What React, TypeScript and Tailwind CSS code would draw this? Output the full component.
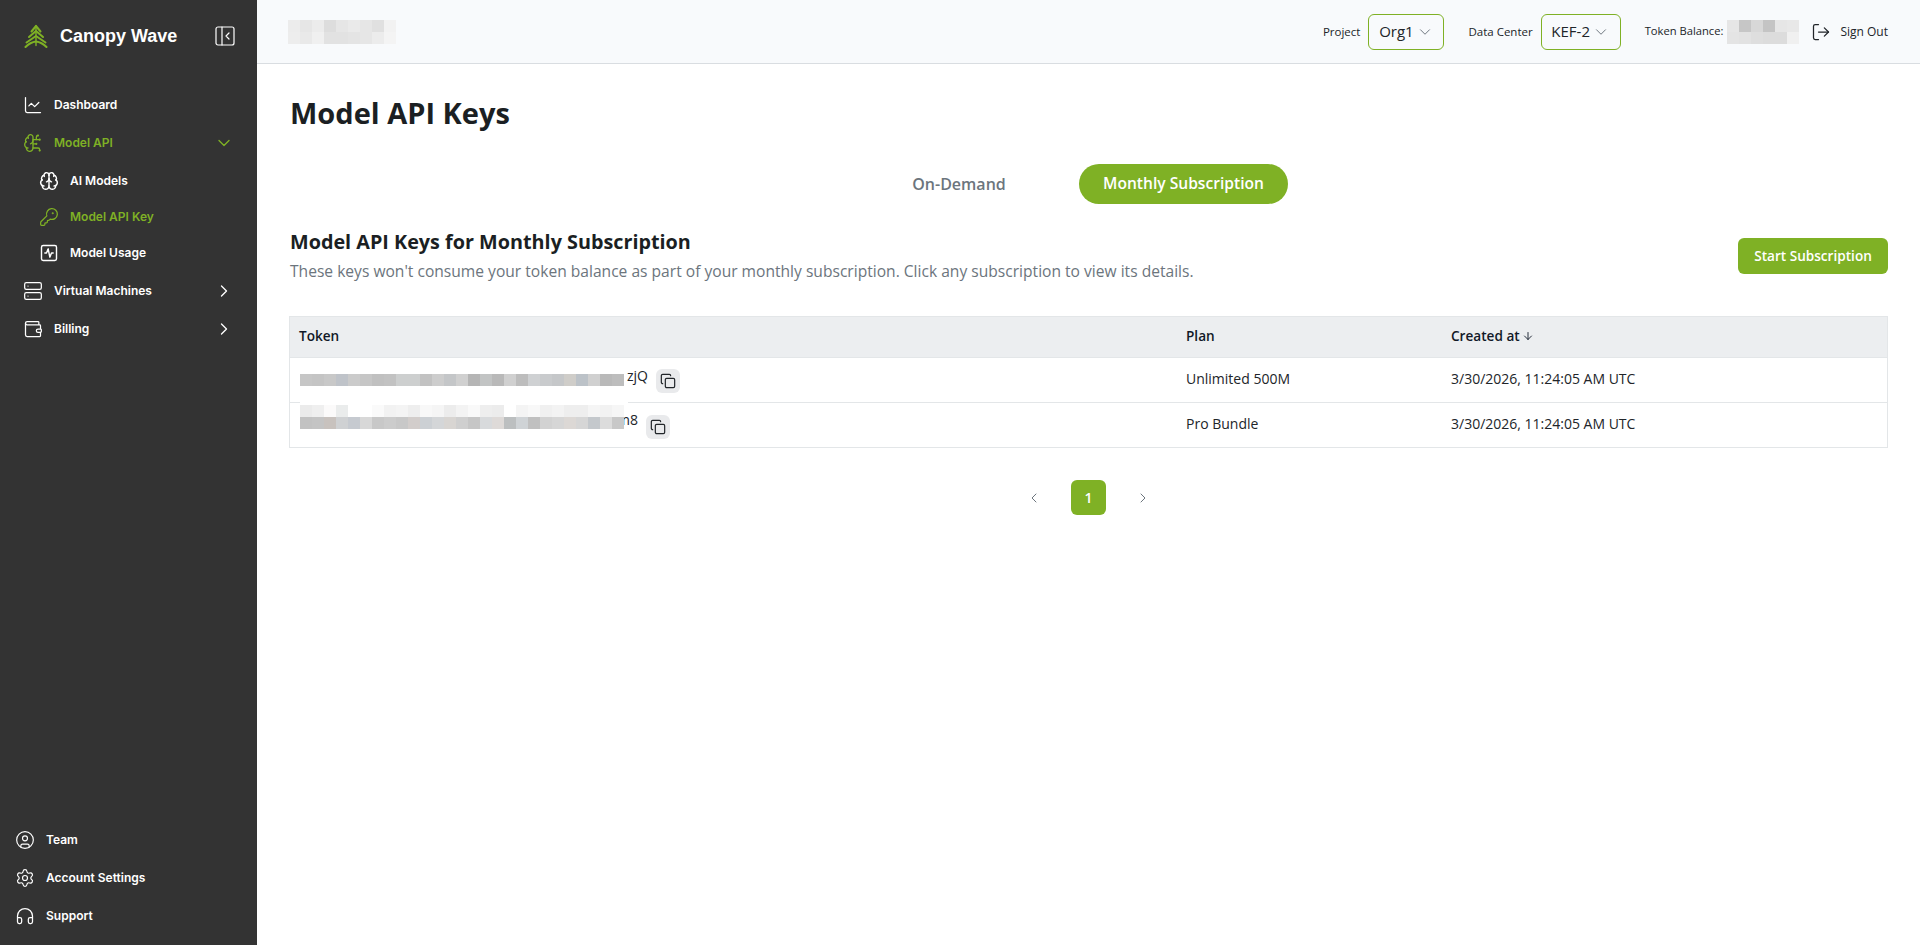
import { ChartLine, ChevronDown, ChevronRight, ChevronLeft, Copy, LogOut, ArrowDown, Server, Wallet, CircleUser, Settings, Headphones, KeyRound, SquareActivity, PanelLeftClose, BrainCircuit, Brain } from "lucide-react";

const SANS = "font-['Open_Sans','Noto_Sans',sans-serif]";

function Mosaic({ rows, cell = 12 }: { rows: string[][]; cell?: number }) {
  return (
    <div className="relative z-10 flex shrink-0 flex-col">
      {rows.map((row, i) => (
        <div key={i} className="flex">
          {row.map((c, j) => (
            <div key={j} style={{ width: cell, height: cell, backgroundColor: c }} />
          ))}
        </div>
      ))}
    </div>
  );
}

function Logo() {
  return (
    <svg viewBox="0 0 24 24" className="h-6 w-6 text-[#7fb125]" fill="none" stroke="currentColor" strokeWidth="2" strokeLinecap="round" strokeLinejoin="round">
      <path d="M12 1.500v20" strokeWidth="1.4" />
      <path d="M7.500 7.500 12 2l4.500 5.500" />
      <path d="M5 13 12 7l7 6" />
      <path d="M2.500 18.500 12 12l9.500 6.500" />
      <path d="M1.500 23c3-3 6.500-5 10.500-5.500 4 .5 7.500 2.500 10.500 5.500" />
    </svg>
  );
}

const ICON = "h-5 w-5 shrink-0";

function NavItem({ icon, label, active, sub, chevron, height = "h-9" }: { icon: React.ReactNode; label: string; active?: boolean; sub?: boolean; chevron?: "down" | "right"; height?: string }) {
  return (
    <div className={`flex ${height} items-center ${sub ? "pl-[41px]" : "pl-[25px]"} pr-[23px] ${active ? "text-[#7fb125]" : "text-white"}`}>
      <span className="flex w-4 shrink-0 justify-center">{icon}</span>
      <span className="ml-[13px] text-[12px] font-semibold font-['Inter',sans-serif]">{label}</span>
      {chevron === "down" && <ChevronDown className={`ml-auto ${ICON}`} strokeWidth={1.6} />}
      {chevron === "right" && <ChevronRight className={`ml-auto ${ICON}`} strokeWidth={1.6} />}
    </div>
  );
}

function Sidebar() {
  return (
    <aside className="flex h-full w-[257px] shrink-0 flex-col bg-[#333333]">
      <div className="flex h-[72px] items-center pl-6 pr-[20px]">
        <Logo />
        <span className="ml-3 text-[18px] font-bold text-white font-['Liberation_Sans',sans-serif]">Canopy Wave</span>
        <PanelLeftClose className="ml-auto h-6 w-6 text-white" strokeWidth={1.2} />
      </div>
      <nav className="mt-[14px] flex flex-col">
        <NavItem height="h-[38px]" icon={<ChartLine className={ICON} strokeWidth={1.5} />} label="Dashboard" />
        <NavItem height="h-[38px]" icon={<BrainCircuit className={ICON} strokeWidth={1.6} />} label="Model API" active chevron="down" />
        <NavItem height="h-[37px]" sub icon={<Brain className={ICON} strokeWidth={1.7} />} label="AI Models" />
        <NavItem sub icon={<KeyRound className={ICON} strokeWidth={1.5} />} label="Model API Key" active />
        <NavItem sub icon={<SquareActivity className={ICON} strokeWidth={1.7} />} label="Model Usage" />
        <div className="h-px" />
        <NavItem height="h-[38px]" icon={<Server className={ICON} strokeWidth={1.5} />} label="Virtual Machines" chevron="right" />
        <NavItem height="h-[38px]" icon={<Wallet className={ICON} strokeWidth={1.5} />} label="Billing" chevron="right" />
      </nav>
      <div className="mt-auto mb-[11px] flex flex-col gap-[2px] text-white">
        {[
          { label: "Team", icon: <CircleUser className={ICON} strokeWidth={1.4} /> },
          { label: "Account Settings", icon: <Settings className={ICON} strokeWidth={1.4} /> },
          { label: "Support", icon: <Headphones className={ICON} strokeWidth={1.5} /> },
        ].map((it) => (
          <div key={it.label} className="flex h-9 items-center pl-[17px]">
            <span className="flex w-4 shrink-0 justify-center">{it.icon}</span>
            <span className="ml-[13px] text-[12px] font-semibold font-['Inter',sans-serif]">{it.label}</span>
          </div>
        ))}
      </div>
    </aside>
  );
}

function Header() {
  return (
    <header className="flex h-[64px] shrink-0 items-center border-b border-[#d9dde1] bg-[#f8fafc] pl-[31px] pr-8 text-[#212529]">
      <Mosaic rows={[
        ["#ececec", "#e6e6e6", "#ececec", "#dddddd", "#e6e6e6", "#eaeaea", "#e6e6e6", "#e0e0e0", "#f2f2f2"],
        ["#ededed", "#e9e9e9", "#f0f0f0", "#e2e2e2", "#e2e2e2", "#e4e4e4", "#e6e6e6", "#ececec", "#f4f4f4"],
      ]} />
      <div className="ml-auto flex items-center text-[11.500px]">
        <span>Project</span>
        <div className="ml-2 flex h-9 w-[76px] items-center justify-center gap-[2px] rounded-md border border-[#7fb125] text-[15px]">
          Org1 <ChevronDown className="h-[18px] w-[18px] text-[#6c757d]" strokeWidth={1.3} />
        </div>
        <span className="ml-6">Data Center</span>
        <div className="ml-2 flex h-9 w-[80px] items-center justify-center gap-[2px] rounded-md border border-[#7fb125] text-[15px]">
          KEF-2 <ChevronDown className="h-[18px] w-[18px] text-[#6c757d]" strokeWidth={1.3} />
        </div>
        <span className="ml-6 text-[11.200px]">Token Balance:</span>
        <div className="ml-1">
          <Mosaic rows={[
            ["#e6e6e6", "#c6c6c6", "#d8d8d8", "#c4c4c4", "#e6e6e6", "#e8e8e8"],
            ["#e4e4e4", "#e2e2e2", "#dedede", "#dcdcdc", "#dcdcdc", "#f0f0f0"],
          ]} />
        </div>
        <LogOut className="ml-3 h-5 w-5" strokeWidth={1.5} />
        <span className="ml-[9px] text-[12px]">Sign Out</span>
      </div>
    </header>
  );
}

function CopyBtn({ className }: { className: string }) {
  return (
    <span className={`inline-flex h-6 w-6 shrink-0 items-center justify-center rounded-md bg-[#e9eaec] ${className}`}>
      <Copy className="h-4 w-4 text-[#212529]" strokeWidth={1.8} />
    </span>
  );
}

export default function App() {
  const m1 = ["#c6c6c6","#c4c4c4","#c8c8c8","#bfc3c9","#cbcbcb","#c6c6c6","#c0c0c0","#c2c2c2","#cdcfcf","#cdcfcf","#c2c2c2","#cdcdcd","#c4c6c8","#d0d0d0","#b5b5b5","#c2c4c4","#b9b9b9","#d0d0d0","#bdbdbd","#cfd1d3","#c9cbcd","#c5c7c9","#cfcdc9","#bcc2c8","#d0d0d0","#b9b9b9","#bdbdbd"];
  const m2a = ["#ebebeb","#efefef","#fbfafa","#eaecec","#ffffff","#ffffff","#fafafa","#f2f2f2","#f4f4f4","#eeeeee","#f8f8f8","#f5f5f5","#ececec","#f3f3f3","#f9f9f9","#eeeeee","#ececec","#ffffff","#f4f4f4","#f8f8f8","#f0f0f0","#f3f3f3","#eeeeee","#eeeeee","#f5f5f5","#f2f2f2","#f6f6f6"];
  const m2b = ["#c2c2c2","#c4c4c4","#c8c2be","#cfd1d3","#c6cad0","#d8d8d8","#c8c8c8","#cccccc","#c8c8c8","#d2cdcb","#ccd0d4","#d4d6d8","#d8d5d2","#cfcfcf","#c6c6c6","#d8dadc","#dedad8","#bcbfc0","#cfd3d6","#c0c0c0","#d2d2d2","#d6d6d6","#dcd8d5","#d6d6d6","#c4c8cc","#dcdcdc","#c8c8c8"];
  return (
    <div className={`flex h-[945px] w-full overflow-hidden bg-white ${SANS}`}>
      <Sidebar />
      <div className="flex min-w-0 flex-1 flex-col">
        <Header />
        <main className="flex-1 px-8 text-[#212529]">
          <h1 className="ml-px mt-[26px] text-[29px] font-bold leading-[46px] text-[#1b1f23]">Model API Keys</h1>
          <div className="mt-[28px] flex h-10 items-center justify-center">
            <button className="h-10 w-[140px] text-[16px] font-semibold text-[#6c757d]">On-Demand</button>
            <button className="ml-[50px] h-10 w-[209px] rounded-full bg-[#7fb125] text-[15.600px] font-semibold text-white">Monthly Subscription</button>
          </div>
          <div className="mt-[22px] flex items-center justify-between">
            <div className="ml-px">
              <h2 className="text-[19.800px] font-bold leading-[32px] text-[#1b1f23]">Model API Keys for Monthly Subscription</h2>
              <p className="mt-[1px] text-[15.600px] leading-[24px] text-[#6c757d]">These keys won't consume your token balance as part of your monthly subscription. Click any subscription to view its details.</p>
            </div>
            <button className="mt-[3px] h-9 w-[150px] rounded-md bg-[#7fb125] text-[13.600px] font-semibold text-white">Start Subscription</button>
          </div>
          <div className="mt-[33px] border border-[#e3e6e8] text-[14px]">
            <div className="flex h-10 items-center bg-[#eceef0] pb-[2px] text-[13.600px] font-semibold text-[#111827]">
              <div className="w-[896px] pl-[9px]">Token</div>
              <div className="w-[265px]">Plan</div>
              <div className="flex items-center">Created at <ArrowDown className="ml-[2px] h-3 w-3" strokeWidth={1.8} /></div>
            </div>
            <div className="flex h-[45px] items-center border-t border-[#e3e6e8]">
              <div className="flex w-[896px] items-center pl-[10px]">
                <Mosaic rows={[m1]} />
                <span className="mb-2 ml-[3px] leading-none">zjQ</span>
                <CopyBtn className="ml-2 mt-px" />
              </div>
              <div className="mb-[3px] w-[265px]">Unlimited 500M</div>
              <div className="mb-[3px]">3/30/2026, 11:24:05 AM UTC</div>
            </div>
            <div className="relative flex h-[45px] items-center border-t border-[#e3e6e8]">
              <div className="absolute -top-px left-[10px] h-px w-[328px] bg-white" />
              <div className="flex w-[896px] items-center pl-[10px]">
                <div className="mb-4">
                  <Mosaic rows={[m2a, m2b]} />
                </div>
                <span className="-ml-[7px] mb-[10px] leading-none">m8</span>
                <CopyBtn className="ml-2 mt-1" />
              </div>
              <div className="mb-[3px] w-[265px]">Pro Bundle</div>
              <div className="mb-[3px]">3/30/2026, 11:24:05 AM UTC</div>
            </div>
          </div>
          <div className="mt-8 flex items-center justify-center text-[#6c757d]">
            <ChevronLeft className="h-4 w-4" strokeWidth={1.5} />
            <span className="mx-[29px] flex h-[35px] w-[35px] items-center justify-center rounded-md bg-[#7fb125] text-[14px] font-semibold text-white">1</span>
            <ChevronRight className="h-4 w-4" strokeWidth={1.5} />
          </div>
        </main>
      </div>
    </div>
  );
}
